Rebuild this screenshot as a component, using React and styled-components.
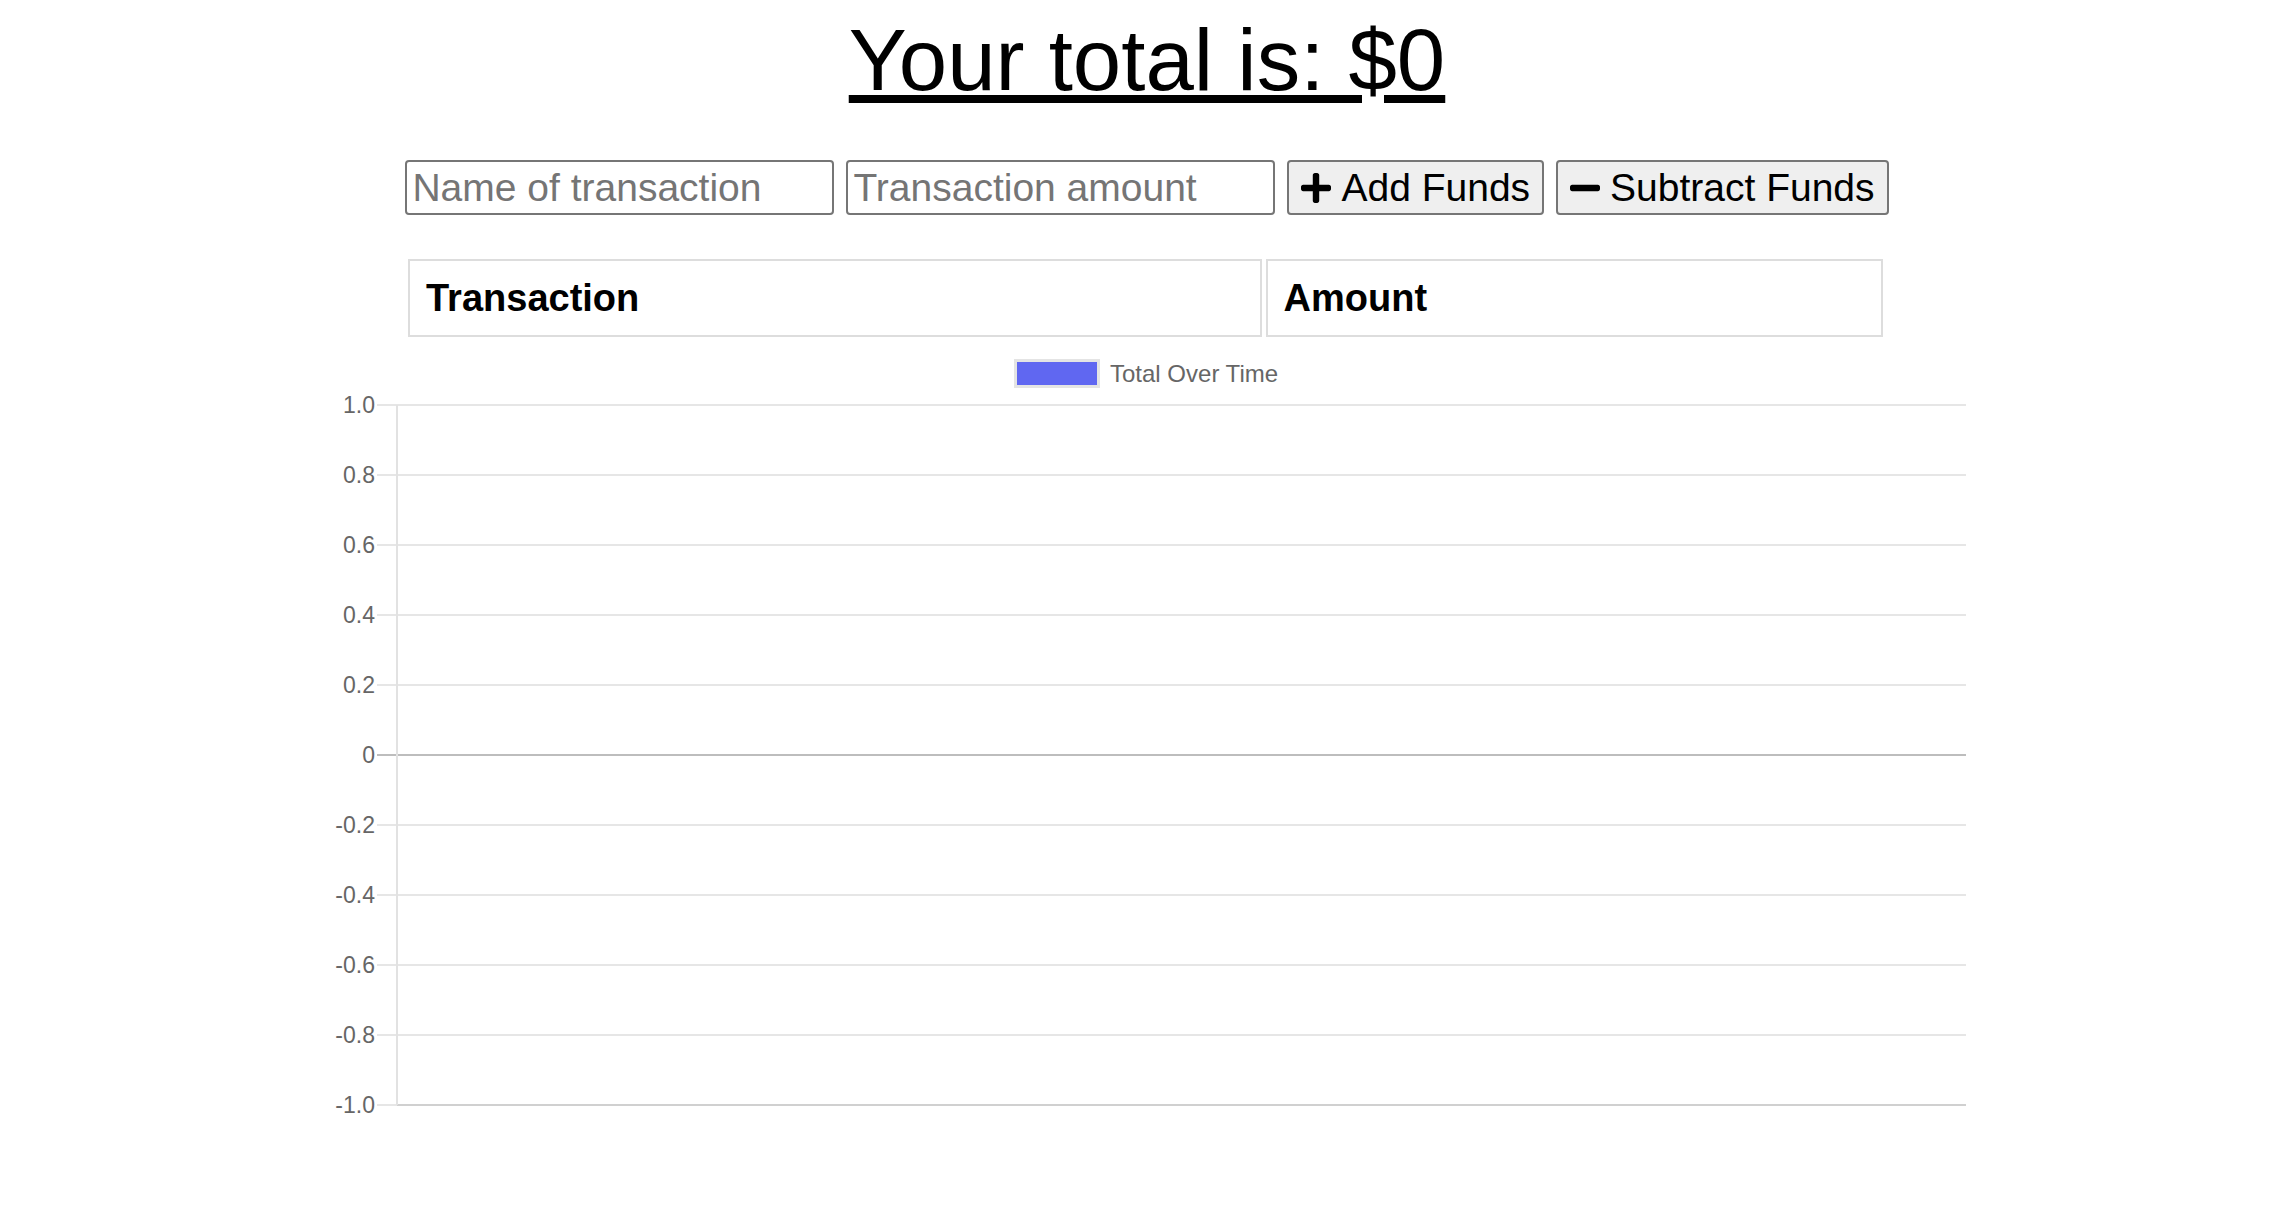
import React from 'react'
import styled, { createGlobalStyle } from 'styled-components'

const GlobalStyle = createGlobalStyle`
  html, body {
    margin: 0;
    padding: 0;
    background: #fff;
  }

  body {
    font-family: "Liberation Sans", Arial, Helvetica, sans-serif;
    color: #000;
  }
`

const Page = styled.div`
  display: flex;
  flex-direction: column;
  align-items: center;
  width: 100%;
`

const Title = styled.h1`
  margin: 10px 0 0;
  font-size: 87px;
  font-weight: normal;
  line-height: normal;
  text-decoration: underline;
`

const Form = styled.div`
  display: flex;
  justify-content: center;
  gap: 12px;
  margin-top: 50px;
`

const Input = styled.input`
  box-sizing: border-box;
  width: 429px;
  height: 55px;
  padding: 2px 5px;
  border: 2px solid #767676;
  border-radius: 4px;
  font-family: inherit;
  font-size: 39px;
  color: #000;

  &::placeholder {
    color: #757575;
  }
`

const Button = styled.button`
  box-sizing: border-box;
  display: flex;
  align-items: center;
  gap: 10px;
  height: 55px;
  padding: 0 12px;
  border: 2px solid #767676;
  border-radius: 4px;
  background: #efefef;
  font-family: inherit;
  font-size: 39px;
  color: #000;

  svg {
    width: 30px;
    height: 30px;
    flex: none;
  }
`

const Table = styled.table`
  width: 1483px;
  margin-top: 40px;
  margin-left: -3px;
  border-spacing: 4px;
`

const HeadCell = styled.th`
  box-sizing: border-box;
  width: ${({ $width }) => $width}px;
  height: 78px;
  padding: 0 16px;
  border: 2px solid #dddddd;
  text-align: left;
  font-size: 38px;
  font-weight: bold;
`

const ChartWrap = styled.div`
  width: 1640px;
  height: 790px;

  svg {
    display: block;
  }

  text {
    font-family: "Liberation Sans", Arial, Helvetica, sans-serif;
    fill: #666;
  }
`

const PlusIcon = () => (
  <svg viewBox="0 32 448 448" aria-hidden="true">
    <path
      fill="currentColor"
      d="M416 208H272V64c0-17.67-14.33-32-32-32h-32c-17.67 0-32 14.33-32 32v144H32c-17.67 0-32 14.330-32 32v32c0 17.67 14.33 32 32 32h144v144c0 17.67 14.33 32 32 32h32c17.67 0 32-14.33 32-32V304h144c17.67 0 32-14.33 32-32v-32c0-17.67-14.330-32-32-32z"
    />
  </svg>
)

const MinusIcon = () => (
  <svg viewBox="0 32 448 448" aria-hidden="true">
    <path
      fill="currentColor"
      d="M416 208H32c-17.67 0-32 14.33-32 32v32c0 17.67 14.33 32 32 32h384c17.67 0 32-14.33 32-32v-32c0-17.67-14.33-32-32-32z"
    />
  </svg>
)

const ticks = ['1.0', '0.8', '0.6', '0.4', '0.2', '0', '-0.2', '-0.4', '-0.6', '-0.8', '-1.0']

// empty line chart, the way chart.js draws it with no data
const Chart = () => {
  const top = 64
  const step = 70
  const bottom = top + step * (ticks.length - 1)

  return (
    <ChartWrap>
      <svg width="1640" height="790" viewBox="0 0 1640 790">
        <rect x="688.5" y="19.5" width="83" height="26" fill="#6067f1" stroke="#e4e4e4" strokeWidth="3" />
        <text x="783" y="41" fontSize="24">Total Over Time</text>

        {ticks.map((label, i) => {
          const y = top + i * step
          const colour = label === '0' ? '#bdbdbd' : '#e6e6e6'
          return (
            <g key={label}>
              <line x1="50" x2="1639" y1={y} y2={y} stroke={colour} strokeWidth="2" />
              <text x="48" y={y + 8} fontSize="23" textAnchor="end">{label}</text>
            </g>
          )
        })}

        <line x1="70" x2="1639" y1={bottom} y2={bottom} stroke="#d0d0d0" strokeWidth="2" />
        <line x1="70" x2="70" y1={top} y2={bottom} stroke="#e2e2e2" strokeWidth="2" />
      </svg>
    </ChartWrap>
  )
}

const App = () => {
  return (
    <Page>
      <GlobalStyle />
      <Title>Your total is: $0</Title>

      <Form>
        <Input type="text" placeholder="Name of transaction" />
        <Input type="number" placeholder="Transaction amount" />
        <Button>
          <PlusIcon />
          Add Funds
        </Button>
        <Button>
          <MinusIcon />
          Subtract Funds
        </Button>
      </Form>

      <Table>
        <thead>
          <tr>
            <HeadCell $width={853}>Transaction</HeadCell>
            <HeadCell $width={617}>Amount</HeadCell>
          </tr>
        </thead>
        <tbody />
      </Table>

      <Chart />
    </Page>
  )
}

export default App
